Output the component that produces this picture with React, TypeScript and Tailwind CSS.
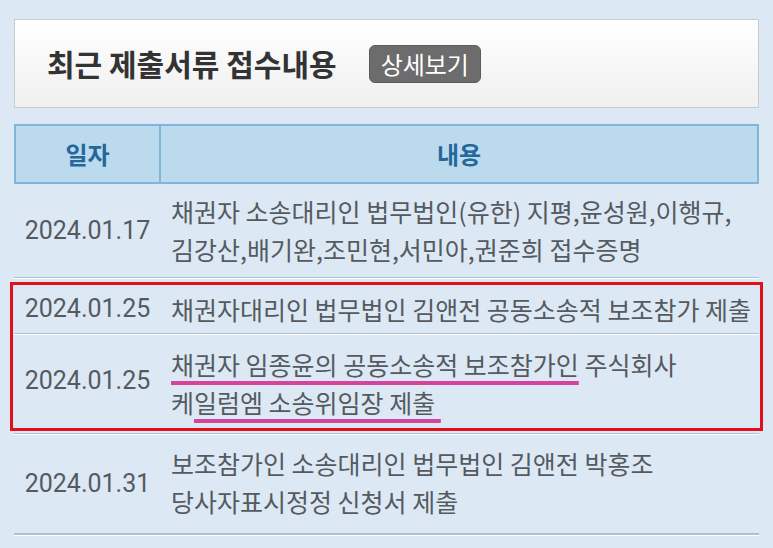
import React from "react";

const ko = { fontFamily: "'Noto Sans CJK KR', 'Noto Sans', sans-serif" };
const num = { fontFamily: "Roboto, 'Noto Sans CJK KR', sans-serif" };

function Row({
  date,
  children,
  last,
  pad,
}: {
  date: string;
  children: React.ReactNode;
  last?: boolean;
  pad: string;
}) {
  return (
    <div
      className={
        "flex items-center " +
        (last ? "" : "border-b border-[#a9c1d3] shadow-[0_1px_0_#ffffff]")
      }
    >
      <div className="w-[147px] shrink-0 text-center text-[25px] text-[#555a60]" style={num}>
        {date}
      </div>
      <div className={"pl-[10px] text-[25px] leading-[38px] text-[#555a60] " + pad} style={ko}>
        {children}
      </div>
    </div>
  );
}

export default function App() {
  return (
    <div className="w-[773px] h-[548px] bg-[#dce9f5] overflow-hidden pt-[19px] px-[14px]">
      <div className="h-[89px] border border-[#c9cccf] bg-gradient-to-b from-white to-[#efefef] flex items-center pl-[32px] gap-[32px]">
        <div className="text-[30px] font-bold text-[#333333]" style={ko}>
          최근 제출서류 접수내용
        </div>
        <div
          className="h-[38px] px-[11px] flex items-center rounded-[6px] bg-[#6c6c6c] border border-[#5a5a5a] text-white text-[24px]"
          style={ko}
        >
          상세보기
        </div>
      </div>

      <div className="mt-[16px] h-[60px] flex border-2 border-[#80b6da] bg-[#bcdaee] text-[#24679a] font-bold text-[24px]" style={ko}>
        <div className="w-[145px] shrink-0 flex items-center justify-center border-r-2 border-[#80b6da]">일자</div>
        <div className="flex-1 flex items-center justify-center">내용</div>
      </div>

      <Row date="2024.01.17" pad="pt-[8px] pb-[9px]">
        채권자 소송대리인 법무법인(유한) 지평,윤성원,이행규,
        <br />
        김강산,배기완,조민현,서민아,권준희 접수증명
      </Row>

      <div className="mt-[4px] -mx-[4px] border-[3px] border-[#e3101b] pl-[1px] pr-[1px]">
        <Row date="2024.01.25" pad="py-[5px]">
          채권자대리인 법무법인 김앤전 공동소송적 보조참가 제출
        </Row>
        <Row date="2024.01.25" pad="pt-[11px] pb-[7px]" last>
          <span className="underline decoration-[#d4449e] decoration-[4px] underline-offset-[6px]">
            채권자 임종윤의 공동소송적 보조참가인
          </span>{" "}
          주식회사
          <br />
          케
          <span className="underline decoration-[#d4449e] decoration-[4px] underline-offset-[6px]">
            일럼엠 소송위임장 제출&nbsp;
          </span>
        </Row>
      </div>

      <div className="mt-[2px] border-t border-[#a9c1d3] shadow-[inset_0_1px_0_#ffffff]">
        <Row date="2024.01.31" pad="pt-[10px] pb-[13px]">
          보조참가인 소송대리인 법무법인 김앤전 박홍조
          <br />
          당사자표시정정 신청서 제출
        </Row>
        <div className="border-b border-[#a9c1d3] shadow-[0_1px_0_#ffffff]" />
      </div>
    </div>
  );
}
